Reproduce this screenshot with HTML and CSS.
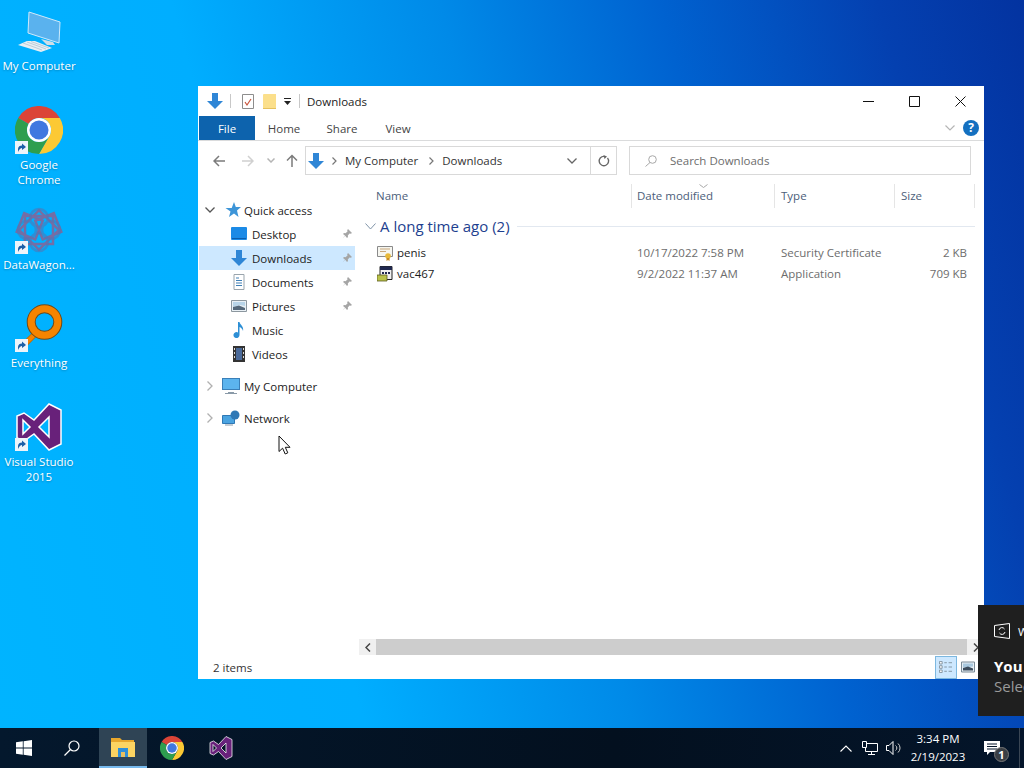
FILE: index.html

```html
<!DOCTYPE html>
<html lang="en">
<head>
  <meta charset="UTF-8" />
  <title>Downloads</title>
  <link rel="stylesheet" href="styles.css">
</head>
<body>
  <svg class="defs" width="0" height="0">
    <symbol id="down" viewBox="0 0 16 16"><path d="M5 0h6v8h5l-8 8-8-8h5z" fill="#2f86d6"/></symbol>
    <symbol id="chrome" viewBox="0 0 48 48">
      <path d="M3.200 12A24 24 0 0 1 44.800 12H24A12 12 0 0 0 13.600 18Z" fill="#db4437"/>
      <path d="M44.800 12A24 24 0 0 1 24 48L34.400 30A12 12 0 0 0 24 12Z" fill="#fcc934"/>
      <path d="M24 48A24 24 0 0 1 3.200 12L13.600 18A12 12 0 0 0 34.400 30Z" fill="#2e9e4f"/>
      <circle cx="24" cy="24" r="12" fill="#fff"/>
      <circle cx="24" cy="24" r="9.500" fill="#3f78e0"/>
    </symbol>
    <symbol id="vs" viewBox="0 0 48 48">
      <path d="M34 1 46 7V41L34 47 19 31 9 38 2 35V13L9 10 19 17ZM8 17V31L15 24ZM34 14 24 24 34 34Z" fill="#68217a" fill-rule="evenodd" stroke="#fff" stroke-width="1.500"/>
    </symbol>
    <symbol id="shortcut" viewBox="0 0 13 13">
      <rect width="13" height="13" fill="#eef4fa"/>
      <path d="M3 11V8C3 5.500 5 4.500 7 4.500V2.500L11 6 7 9V7C5.500 7 4.500 8 3 11Z" fill="#1c5fa8"/>
    </symbol>
    <symbol id="pin" viewBox="0 0 10 10"><path d="M6 0 10 4 8.800 4.800 7.500 4.500 5.800 6.500 6 8 5 9 3.200 6.800 .5 9.500 3 6.600 1 5 2 4 3.500 4.200 5.500 2.500 5.200 1.200Z" fill="#a5a5a5"/></symbol>
    <symbol id="monitor" viewBox="0 0 18 16">
      <rect x=".5" y=".5" width="17" height="11" fill="#5cb4ee" stroke="#3a7fb8"/>
      <path d="M6 14h6v1H6z M3 15h12v1H3z" fill="#8a9aa8"/>
    </symbol>
  </svg>

  <main class="desktop">
    <div class="desk-item item-computer">
      <span class="desk-icon">
        <svg viewBox="0 0 48 48" width="48" height="48">
          <path d="M14 5 45 15 44 36 13 26Z" fill="#5ab2ee" stroke="#cfe9fb" stroke-width="1"/>
          <path d="M26 32 38 35 40 38 32 38Z" fill="#cfdde6"/>
          <path d="M12 34 20 34 37 41 26 45 3 38Z" fill="#e8eff4"/>
          <path d="M8 36 27 43M12 35 31 42M16 34.500 34 41" stroke="#a9bdcc" stroke-width=".7"/>
        </svg>
      </span>
      <span class="desk-label">My Computer</span>
    </div>
    <div class="desk-item item-chrome">
      <span class="desk-icon">
        <svg width="48" height="48"><use href="#chrome"/></svg>
        <svg class="badge"><use href="#shortcut"/></svg>
      </span>
      <span class="desk-label">Google Chrome</span>
    </div>
    <div class="desk-item item-wagon">
      <span class="desk-icon">
        <svg viewBox="0 0 48 48" width="48" height="48" fill="none" stroke-width="2.500">
          <g stroke="#a5527f" opacity=".7">
            <rect x="10" y="10" width="28" height="28"/>
            <rect x="10" y="10" width="28" height="28" transform="rotate(45 24 24)"/>
            <rect x="4" y="14" width="20" height="20" transform="rotate(22 24 24)"/>
            <rect x="24" y="14" width="20" height="20" transform="rotate(-22 24 24)"/>
          </g>
          <g stroke="#4f78b8" opacity=".6">
            <circle cx="24" cy="12" r="9"/>
            <circle cx="24" cy="36" r="9"/>
            <circle cx="12" cy="24" r="9"/>
            <circle cx="36" cy="24" r="9"/>
          </g>
        </svg>
        <svg class="badge"><use href="#shortcut"/></svg>
      </span>
      <span class="desk-label">DataWagon...</span>
    </div>
    <div class="desk-item item-everything">
      <span class="desk-icon">
        <svg viewBox="0 0 48 48" width="48" height="48" fill="none">
          <path d="M7 43 20 30" stroke="#c56a00" stroke-width="6"/>
          <path d="M7 43 20 30" stroke="#f58400" stroke-width="4"/>
          <circle cx="29.500" cy="18" r="13.300" stroke="#6e4a1a" stroke-width="9"/>
          <circle cx="29.500" cy="18" r="13.300" stroke="#f58400" stroke-width="7"/>
        </svg>
        <svg class="badge"><use href="#shortcut"/></svg>
      </span>
      <span class="desk-label">Everything</span>
    </div>
    <div class="desk-item item-vs">
      <span class="desk-icon">
        <svg width="48" height="48"><use href="#vs"/></svg>
        <svg class="badge"><use href="#shortcut"/></svg>
      </span>
      <span class="desk-label">Visual Studio 2015</span>
    </div>

    <section class="window">
      <header class="titlebar">
        <svg class="qa-down"><use href="#down"/></svg>
        <span class="qa-sep"></span>
        <svg class="qa-props" viewBox="0 0 12 15">
          <path d="M.5.500h11v14H.5z" fill="#fff" stroke="#8d8d8d"/>
          <path d="M3 8l2 3 4-6" fill="none" stroke="#c8553d" stroke-width="1.200"/>
        </svg>
        <span class="qa-folder"></span>
        <svg class="qa-drop" viewBox="0 0 7 7"><path d="M0 0h7v1H0zM0 3h7L3.500 7z" fill="#222"/></svg>
        <span class="qa-sep sep-title"></span>
        <span class="title-text">Downloads</span>
        <div class="win-buttons">
          <span class="win-btn"><svg viewBox="0 0 11 11"><path d="M0 5.500h11" stroke="#111"/></svg></span>
          <span class="win-btn"><svg viewBox="0 0 11 11"><path d="M.5.500h10v10H.5z" fill="none" stroke="#111"/></svg></span>
          <span class="win-btn"><svg viewBox="0 0 11 11"><path d="M.5.500l10 10M10.500.500l-10 10" stroke="#111"/></svg></span>
        </div>
      </header>

      <nav class="ribbon">
        <span class="tab tab-file">File</span>
        <span class="tab tab-home">Home</span>
        <span class="tab tab-share">Share</span>
        <span class="tab tab-view">View</span>
        <svg class="ribbon-chev" viewBox="0 0 10 6"><path d="M.5.500 5 5 9.500.500" fill="none" stroke="#b5b5b5" stroke-width="1.200"/></svg>
        <span class="help">?</span>
      </nav>

      <div class="addressrow">
        <span class="nav-btn"><svg viewBox="0 0 12 12"><path d="M12 6H1.500M6 1 1 6l5 5" fill="none" stroke="#7b7b7b" stroke-width="1.500"/></svg></span>
        <span class="nav-btn"><svg viewBox="0 0 12 12"><path d="M0 6h10.500M6 1l5 5-5 5" fill="none" stroke="#d0d0d0" stroke-width="1.500"/></svg></span>
        <span class="nav-drop"><svg viewBox="0 0 8 5"><path d="M.5.500 4 4 7.500.500" fill="none" stroke="#b5b5b5" stroke-width="1.500"/></svg></span>
        <span class="nav-up"><svg viewBox="0 0 12 13"><path d="M6 13V2M1 6.500 6 1.500l5 5" fill="none" stroke="#7b7b7b" stroke-width="1.500"/></svg></span>
        <div class="addressbox">
          <svg class="addr-icon"><use href="#down"/></svg>
          <svg class="crumb-chev" viewBox="0 0 5 8"><path d="M.5.500 4 4 .5 7.500" fill="none" stroke="#777" stroke-width="1.200"/></svg>
          <span class="crumb">My Computer</span>
          <svg class="crumb-chev" viewBox="0 0 5 8"><path d="M.5.500 4 4 .5 7.500" fill="none" stroke="#777" stroke-width="1.200"/></svg>
          <span class="crumb">Downloads</span>
          <svg class="addr-drop" viewBox="0 0 10 6"><path d="M.5.500 5 5 9.500.500" fill="none" stroke="#666" stroke-width="1.300"/></svg>
        </div>
        <span class="refresh"><svg viewBox="0 0 12 12"><path d="M9.500 3A4.700 4.700 0 1 1 6 1.300" fill="none" stroke="#666" stroke-width="1.300"/><path d="M5.500 0 9 1.500 6.500 4z" fill="#666"/></svg></span>
        <div class="searchbox">
          <svg class="search-icon" viewBox="0 0 12 12"><circle cx="7.500" cy="4.500" r="3.800" fill="none" stroke="#a8a8a8"/><path d="M5 7.500 .5 11.500" stroke="#a8a8a8"/></svg>
          <span>Search Downloads</span>
        </div>
      </div>

      <div class="panes">
        <aside class="sidebar">
          <div class="nav-row nav-top">
            <svg class="chev" viewBox="0 0 10 6"><path d="M.5.500 5 5 9.500.500" fill="none" stroke="#555" stroke-width="1.300"/></svg>
            <svg class="nav-icon star" viewBox="0 0 16 16"><path d="M9 0l1.800 5H16l-4 3.500L13.500 15 9 11.500 4 15l1.500-5.500-5-3.500h6.200z" fill="#3d95d8"/></svg>
            <span>Quick access</span>
          </div>
          <div class="nav-row nav-sub">
            <svg class="nav-icon" viewBox="0 0 16 16"><rect y="1" width="16" height="13" rx="1" fill="#1b8ae6"/><path d="M1 12h14v1H1z" fill="#0b5cab"/></svg>
            <span>Desktop</span>
            <svg class="pin"><use href="#pin"/></svg>
          </div>
          <div class="nav-row nav-sub selected">
            <svg class="nav-icon"><use href="#down"/></svg>
            <span>Downloads</span>
            <svg class="pin"><use href="#pin"/></svg>
          </div>
          <div class="nav-row nav-sub">
            <svg class="nav-icon" viewBox="0 0 16 16"><path d="M3 .500h10v15H3z" fill="#fff" stroke="#9aa5ad"/><path d="M5 4h3M5 6.500h6M5 9h6M5 11.500h6" stroke="#3f7fb5"/></svg>
            <span>Documents</span>
            <svg class="pin"><use href="#pin"/></svg>
          </div>
          <div class="nav-row nav-sub">
            <svg class="nav-icon" viewBox="0 0 16 16"><path d="M.5 2.500h15v11H.5z" fill="#e9f0f5" stroke="#8c979f"/><path d="M2 4h12v4L9 7 2 9z" fill="#b8d4e8"/><path d="M2 12V9l6-1.500L14 10v2z" fill="#55687a"/></svg>
            <span>Pictures</span>
            <svg class="pin"><use href="#pin"/></svg>
          </div>
          <div class="nav-row nav-sub">
            <svg class="nav-icon" viewBox="0 0 16 16"><path d="M7 0h1.500c.5 3 4.500 4 3.500 9-.5-2-2-3.500-3.500-4v8a3 3 0 1 1-1.500-2.500z" fill="#2d8fd5"/></svg>
            <span>Music</span>
          </div>
          <div class="nav-row nav-sub">
            <svg class="nav-icon" viewBox="0 0 16 16"><path d="M2 0h12v16H2z" fill="#333"/><path d="M5 2h6v12H5z" fill="#4a6a9a"/><path d="M3 2h1v2H3zM3 6h1v2H3zM3 10h1v2H3zM12 2h1v2h-1zM12 6h1v2h-1zM12 10h1v2h-1z" fill="#ddd"/></svg>
            <span>Videos</span>
          </div>
          <div class="nav-row nav-top nav-gap">
            <svg class="chev chev-side" viewBox="0 0 6 10"><path d="M.5.500 5 5 .5 9.500" fill="none" stroke="#b0b0b0" stroke-width="1.300"/></svg>
            <svg class="nav-icon wide"><use href="#monitor"/></svg>
            <span>My Computer</span>
          </div>
          <div class="nav-row nav-top nav-gap">
            <svg class="chev chev-side" viewBox="0 0 6 10"><path d="M.5.500 5 5 .5 9.500" fill="none" stroke="#b0b0b0" stroke-width="1.300"/></svg>
            <svg class="nav-icon wide" viewBox="0 0 18 16"><path d="M.5 5.500h12v8H.5z" fill="#4aa3e0" stroke="#2f78b5"/><circle cx="13" cy="5" r="4.500" fill="#2f78b5"/><path d="M3 15h8" stroke="#8a9aa8"/></svg>
            <span>Network</span>
          </div>
        </aside>

        <div class="filepane">
          <div class="columns">
            <span class="col col-name">Name</span>
            <span class="col col-date">Date modified
              <svg class="sort" viewBox="0 0 9 4"><path d="M.5.500 4.500 3.500 8.500.500" fill="none" stroke="#a8a8a8"/></svg>
            </span>
            <span class="col col-type">Type</span>
            <span class="col col-size">Size</span>
          </div>
          <div class="group">
            <svg class="group-chev" viewBox="0 0 11 7"><path d="M.5.500 5.500 6 10.500.500" fill="none" stroke="#7f93a8"/></svg>
            <span class="group-title">A long time ago (2)</span>
            <span class="group-line"></span>
          </div>
          <div class="file-row">
            <span class="file-name">
              <svg class="file-icon" viewBox="0 0 16 16"><path d="M.5 1.500h15v10H.5z" fill="#f6f6f0" stroke="#8a8a8a"/><path d="M3 4h10M3 6.500h6" stroke="#c9a77a"/><circle cx="11" cy="11" r="2.800" fill="#e8b93a"/><path d="M9.500 13v3l1.500-1 1.500 1v-3z" fill="#c98d22"/></svg>
              penis
            </span>
            <span>10/17/2022 7:58 PM</span>
            <span>Security Certificate</span>
            <span class="file-size">2 KB</span>
          </div>
          <div class="file-row">
            <span class="file-name">
              <svg class="file-icon" viewBox="0 0 16 16"><path d="M3 .500h12v13H3z" fill="#f2f2f2" stroke="#222"/><path d="M3 .500h12v3.500H3z" fill="#20284f"/><path d="M5 6h2v2H5zM8 6h2v2H8zM11 6h2v2h-2z" fill="#20284f"/><path d="M0 9h10v6H0z" fill="#b9c24a" stroke="#5a5a1e" stroke-width=".8"/></svg>
              vac467
            </span>
            <span>9/2/2022 11:37 AM</span>
            <span>Application</span>
            <span class="file-size">709 KB</span>
          </div>

          <div class="hscroll">
            <span class="scroll-arrow"><svg viewBox="0 0 6 9"><path d="M5 .500 1 4.500 5 8.500" fill="none" stroke="#444" stroke-width="1.500"/></svg></span>
            <span class="scroll-thumb"></span>
            <span class="scroll-arrow"><svg viewBox="0 0 6 9"><path d="M1 .500 5 4.500 1 8.500" fill="none" stroke="#444" stroke-width="1.500"/></svg></span>
          </div>
        </div>
      </div>

      <footer class="statusbar">
        <span>2 items</span>
        <span class="view-btn active">
          <svg viewBox="0 0 16 14"><path d="M.5.500h3v3h-3zM.5 5.500h3v3h-3zM.5 10.500h3v3h-3z" fill="#fff" stroke="#7a8a96"/><path d="M6 2h3M11 2h4M6 7h3M11 7h4M6 12h3M11 12h4" stroke="#7a8a96"/></svg>
        </span>
        <span class="view-btn">
          <svg viewBox="0 0 14 11"><path d="M.5.500h13v10H.5z" fill="#e6eef4" stroke="#7a8a96"/><path d="M2 2h10v3L2 6z" fill="#a9c8de"/><path d="M2 9V6.500L7 5l5 2v2z" fill="#3d4c5c"/></svg>
        </span>
      </footer>
    </section>

    <aside class="toast">
      <div class="toast-head">
        <svg class="toast-icon" viewBox="0 0 16 16"><path d="M.5 2.500 15.500.500v15L.5 13.500z" fill="none" stroke="#fff"/><path d="M5 7a3 3 0 0 1 5.500-1M11 9a3 3 0 0 1-5.500 1" fill="none" stroke="#fff"/></svg>
        <span>Windows</span>
      </div>
      <div class="toast-title">You</div>
      <div class="toast-sub">Select</div>
    </aside>

    <!-- mouse pointer -->
    <svg class="cursor" viewBox="0 0 13 20"><path d="M1 1V16.500L4.600 13.200 7.200 19 9.800 17.800 7.300 12.300H12Z" fill="#fff" stroke="#111"/></svg>
  </main>

  <footer class="taskbar">
    <span class="task-btn">
      <svg class="start" viewBox="0 0 16 16"><path d="M0 2.300 6.800 1.300V7.500H0ZM7.600 1.200 16 0V7.500H7.600ZM0 8.400H6.800V14.700L0 13.700ZM7.600 8.400H16V16L7.600 14.800Z" fill="#fff"/></svg>
    </span>
    <span class="task-btn">
      <svg class="task-search" viewBox="0 0 16 16"><circle cx="10" cy="6" r="5" fill="none" stroke="#fff" stroke-width="1.200"/><path d="M6.500 9.500 .5 15.500" stroke="#fff" stroke-width="1.200"/></svg>
    </span>
    <span class="task-btn task-explorer">
      <svg class="task-icon" viewBox="0 0 24 20"><path d="M0 1h9l2 2h12v4H0z" fill="#e8a72c"/><path d="M0 5h24v15H0z" fill="#fcd462"/><path d="M7 11h10v9H7z" fill="#2f8fd8"/><path d="M10 15h4v5h-4z" fill="#e8c060"/></svg>
    </span>
    <span class="task-btn">
      <svg class="task-icon"><use href="#chrome"/></svg>
    </span>
    <span class="task-btn">
      <svg class="task-icon"><use href="#vs"/></svg>
    </span>
    <div class="tray">
      <span class="tray-item"><svg viewBox="0 0 12 7" class="tray-caret"><path d="M.5 6.500 6 1l5.500 5.500" fill="none" stroke="#fff" stroke-width="1.100"/></svg></span>
      <span class="tray-item"><svg viewBox="0 0 16 14" class="tray-icon"><path d="M3.500 2.500h12v8h-12zM9.500 10.500v3M6 13.500h7" fill="none" stroke="#fff"/><path d="M.5.500h4v6h-4z" fill="#04152a" stroke="#fff"/></svg></span>
      <span class="tray-item"><svg viewBox="0 0 16 14" class="tray-icon"><path d="M.5 4.500H3L7 .5v13l-4-4H.5z" fill="none" stroke="#fff"/><path d="M9.500 4.500a3 3 0 0 1 0 5M12 2.500a6 6 0 0 1 0 9" fill="none" stroke="#cfcfcf"/></svg></span>
      <span class="clock"><span>3:34 PM</span><span>2/19/2023</span></span>
      <span class="notif">
        <svg viewBox="0 0 16 14" class="notif-icon"><path d="M0 0h16v11H6l-3 3v-3H0z" fill="#fff"/><path d="M3 3h10M3 5.500h10M3 8h10" stroke="#04152a"/></svg>
        <span class="notif-count">1</span>
      </span>
      <span class="show-desktop"></span>
    </div>
  </footer>
</body>
</html>
```

FILE: styles.css

```css
* {
  box-sizing: border-box;
}
html, body {
  margin: 0;
  height: 100%;
}
body {
  width: 1024px;
  height: 768px;
  overflow: hidden;
  display: flex;
  flex-direction: column;
  font-family: "Open Sans", "Noto Sans", sans-serif;
  font-size: 11.5px;
  color: #1c1c1c;
}
svg {
  display: block;
}
.defs {
  position: absolute;
}

/* desktop */
.desktop {
  flex: 1;
  position: relative;
  overflow: hidden;
  background: linear-gradient(75deg, #00b4ff 0%, #00aeff 30%, #008ae8 52%, #0062d0 70%, #0440b0 88%, #0333a0 100%);
}
.desk-item {
  position: absolute;
  left: 0;
  width: 78px;
  display: flex;
  flex-direction: column;
  align-items: center;
}
.item-computer { top: 7px; }
.item-chrome { top: 106px; }
.item-wagon { top: 206px; }
.item-everything { top: 304px; }
.item-vs { top: 403px; }
.desk-icon {
  position: relative;
  width: 48px;
  height: 48px;
}
.badge {
  position: absolute;
  left: 0;
  bottom: 0;
  width: 13px;
  height: 13px;
}
.desk-label {
  margin-top: 3px;
  width: 78px;
  text-align: center;
  line-height: 15px;
  color: #fff;
  text-shadow: 0 1px 2px rgba(0,0,0,0.25);
  white-space: normal;
}
.item-chrome .desk-label {
  padding: 0 14px;
}

/* explorer window */
.window {
  position: absolute;
  left: 198px;
  top: 86px;
  width: 786px;
  height: 593px;
  background: #fff;
  display: flex;
  flex-direction: column;
}
.titlebar {
  height: 30px;
  display: flex;
  align-items: center;
  padding-left: 9px;
  flex-shrink: 0;
}
.qa-down {
  width: 16px;
  height: 16px;
}
.qa-sep {
  width: 1px;
  height: 14px;
  background: #c8c8c8;
  margin-left: 7px;
}
.qa-props {
  width: 12px;
  height: 15px;
  margin-left: 11px;
}
.qa-folder {
  width: 13px;
  height: 15px;
  margin-left: 9px;
  background: #fbdf8b;
  border-bottom: 1px solid #e5c05d;
  border-radius: 1px 0 0 0;
}
.qa-drop {
  width: 7px;
  height: 7px;
  margin-left: 8px;
}
.sep-title {
  margin-left: 8px;
}
.title-text {
  margin-left: 7px;
}
.win-buttons {
  margin-left: auto;
  display: flex;
  padding-right: 1px;
}
.win-btn {
  width: 46px;
  height: 30px;
  display: flex;
  align-items: center;
  justify-content: center;
}
.win-btn svg {
  width: 11px;
  height: 11px;
}

.ribbon {
  height: 25px;
  flex-shrink: 0;
  display: flex;
  align-items: stretch;
  border-bottom: 1px solid #dadbdc;
  padding-left: 1px;
}
.tab {
  display: flex;
  align-items: center;
  justify-content: center;
  color: #444;
}
.tab-file {
  width: 56px;
  background: #0d63ad;
  color: #fff;
}
.tab-home { width: 58px; }
.tab-share { width: 58px; }
.tab-view { width: 54px; }
.ribbon-chev {
  width: 10px;
  height: 6px;
  margin: 9px 0 0 auto;
}
.help {
  width: 16px;
  height: 16px;
  margin: 4px 5px 0 8px;
  border-radius: 50%;
  background: #1470c0;
  color: #fff;
  font-weight: 700;
  font-size: 12px;
  line-height: 16px;
  text-align: center;
}

.addressrow {
  height: 37px;
  flex-shrink: 0;
  display: flex;
  align-items: center;
  padding: 2px 13px 0 6px;
  color: #333;
}
.nav-btn {
  width: 29px;
  display: flex;
  justify-content: center;
}
.nav-btn svg {
  width: 12px;
  height: 12px;
}
.nav-drop {
  width: 17px;
  display: flex;
  justify-content: center;
}
.nav-drop svg {
  width: 8px;
  height: 5px;
}
.nav-up {
  width: 26px;
  display: flex;
  justify-content: center;
}
.nav-up svg {
  width: 12px;
  height: 13px;
}
.addressbox {
  width: 285px;
  height: 29px;
  border: 1px solid #d9d9d9;
  border-right: 0;
  display: flex;
  align-items: center;
  padding-left: 2px;
}
.addr-icon {
  width: 16px;
  height: 16px;
}
.crumb {
  margin-right: 3px;
}
.crumb-chev {
  width: 5px;
  height: 8px;
  margin: 0 8px;
}
.addr-drop {
  width: 10px;
  height: 6px;
  margin-left: auto;
  margin-right: 13px;
}
.refresh {
  width: 27px;
  height: 29px;
  border: 1px solid #d9d9d9;
  display: flex;
  align-items: center;
  justify-content: center;
}
.refresh svg {
  width: 12px;
  height: 12px;
}
.searchbox {
  margin-left: 12px;
  flex: 1;
  height: 29px;
  border: 1px solid #d9d9d9;
  display: flex;
  align-items: center;
  padding-left: 15px;
  color: #6d6d6d;
}
.search-icon {
  width: 12px;
  height: 12px;
  margin-right: 13px;
}

.panes {
  flex: 1;
  display: flex;
  min-height: 0;
}
.sidebar {
  width: 157px;
  flex-shrink: 0;
  padding-top: 20px;
}
.nav-row {
  height: 24px;
  display: flex;
  align-items: center;
}
.nav-top {
  padding-left: 7px;
}
.nav-sub {
  padding-left: 33px;
  padding-right: 3px;
}
.nav-gap {
  margin-top: 8px;
}
.selected {
  background: #cde8ff;
  margin-left: 1px;
  padding-left: 32px;
}
.chev {
  width: 10px;
  height: 6px;
}
.chev-side {
  width: 6px;
  height: 10px;
  margin: 0 2px;
}
.nav-icon {
  width: 16px;
  height: 16px;
  margin-right: 5px;
}
.star {
  margin-left: 10px;
  margin-right: 3px;
}
.wide {
  width: 18px;
  margin-left: 7px;
  margin-right: 4px;
}
.pin {
  width: 10px;
  height: 10px;
  margin-left: auto;
}

.filepane {
  flex: 1;
  display: flex;
  flex-direction: column;
  min-width: 0;
  padding-right: 5px;
}
.columns {
  margin-top: 6px;
  height: 24px;
  flex-shrink: 0;
  display: flex;
  color: #4c607a;
  padding-left: 15px;
}
.col {
  position: relative;
  height: 24px;
  line-height: 23px;
  padding-left: 6px;
  border-right: 1px solid #e5e5e5;
}
.col-name {
  width: 262px;
}
.col-date {
  width: 143px;
  padding-left: 5px;
}
.col-type { width: 120px; }
.col-size { width: 80px; }
.sort {
  position: absolute;
  left: 67px;
  top: 0;
  width: 9px;
  height: 4px;
}
.group {
  margin-top: 7px;
  height: 22px;
  display: flex;
  align-items: center;
  padding-left: 10px;
}
.group-chev {
  width: 11px;
  height: 7px;
}
.group-title {
  font-size: 15px;
  color: #1e3f8f;
  margin-left: 4px;
}
.group-line {
  flex: 1;
  height: 1px;
  background: #e2e8f0;
  margin: 0 4px 0 7px;
}
.file-row {
  height: 21px;
  display: grid;
  grid-template-columns: 260px 144px 120px 66px;
  align-items: center;
  padding-left: 22px;
  color: #6d6d6d;
}
.group + .file-row {
  margin-top: 5px;
}
.file-name {
  display: flex;
  align-items: center;
  color: #1c1c1c;
}
.file-icon {
  width: 16px;
  height: 16px;
  margin-right: 4px;
}
.file-size {
  text-align: right;
}
.hscroll {
  margin: auto -5px 0 4px;
  height: 16px;
  flex-shrink: 0;
  display: flex;
}
.scroll-arrow {
  width: 17px;
  background: #f0f0f0;
  display: flex;
  align-items: center;
  justify-content: center;
}
.scroll-arrow svg {
  width: 6px;
  height: 9px;
}
.scroll-thumb {
  flex: 1;
  background: #cdcdcd;
}

.statusbar {
  height: 24px;
  flex-shrink: 0;
  display: flex;
  align-items: center;
  padding: 0 5px 0 15px;
  color: #333;
}
.view-btn {
  width: 22px;
  height: 23px;
  display: flex;
  align-items: center;
  justify-content: center;
}
.view-btn svg {
  width: 14px;
  height: 12px;
}
.view-btn.active {
  margin-left: auto;
  background: #cde8ff;
  border: 1px solid #7db8e0;
  margin-right: 0;
}

/* notification that is sliding in */
.toast {
  position: absolute;
  left: 978px;
  top: 605px;
  width: 360px;
  height: 111px;
  background: #1f1f1f;
  color: #fff;
  padding-left: 16px;
}
.toast-head {
  display: flex;
  align-items: center;
  height: 18px;
  margin-top: 17px;
}
.toast-icon {
  width: 16px;
  height: 16px;
  margin-right: 8px;
}
.toast-title {
  margin-top: 16px;
  font-size: 15px;
  font-weight: 700;
  line-height: 20px;
}
.toast-sub {
  font-size: 15px;
  line-height: 20px;
  color: #9a9a9a;
}
.cursor {
  position: absolute;
  left: 278px;
  top: 435px;
  width: 13px;
  height: 20px;
}

/* taskbar */
.taskbar {
  height: 40px;
  flex-shrink: 0;
  display: flex;
  align-items: stretch;
  background: linear-gradient(90deg, #04182d, #03101f 60%, #04152a);
  color: #fff;
}
.task-btn {
  width: 48px;
  display: flex;
  align-items: center;
  justify-content: center;
  margin-right: 1px;
}
.task-btn:first-child {
  margin-right: 0;
}
.task-btn:nth-child(2) {
  margin-right: 3px;
}
.start {
  width: 16px;
  height: 16px;
}
.task-search {
  width: 16px;
  height: 16px;
}
.task-icon {
  width: 24px;
  height: 24px;
}
.task-explorer {
  background: #2f4455;
  border-bottom: 2px solid #76b9ed;
}
.tray {
  margin-left: auto;
  display: flex;
  align-items: center;
}
.tray-item {
  width: 24px;
  display: flex;
  justify-content: center;
}
.tray-caret {
  width: 12px;
  height: 7px;
}
.tray-icon {
  width: 16px;
  height: 14px;
}
.clock {
  width: 64px;
  display: flex;
  flex-direction: column;
  align-items: center;
  line-height: 18px;
}
.notif {
  position: relative;
  width: 44px;
  display: flex;
  justify-content: center;
}
.notif-icon {
  width: 16px;
  height: 14px;
}
.notif-count {
  position: absolute;
  left: 24px;
  top: 6px;
  width: 15px;
  height: 15px;
  border-radius: 50%;
  background: #3a3f45;
  border: 1px solid #777;
  font-size: 11px;
  font-weight: 700;
  line-height: 13px;
  text-align: center;
}
.show-desktop {
  width: 5px;
  height: 40px;
  margin-left: 5px;
  border-left: 1px solid #3a4654;
}
```
